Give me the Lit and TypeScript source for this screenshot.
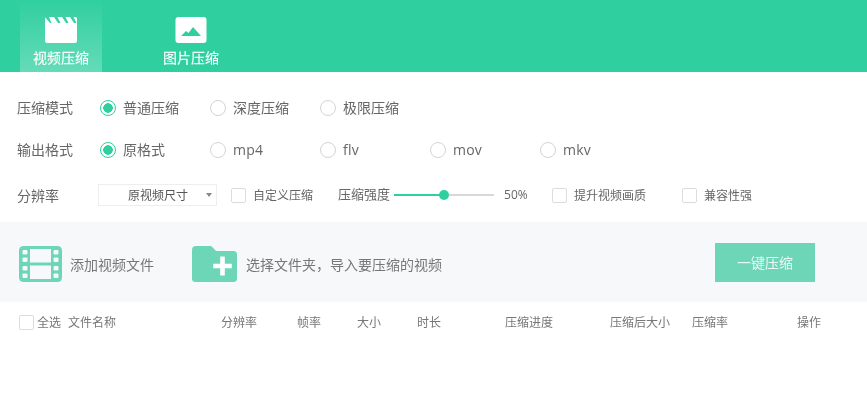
import { LitElement, html, css, svg } from "lit";
import { customElement } from "lit/decorators.js";

const clapper = svg`<svg class="tab-icon" viewBox="0 0 32 26" width="32" height="26">
  <path fill="#fff" d="M1.500 0h29a1.500 1.500 0 0 1 1.500 1.500V24a2 2 0 0 1-2 2H2a2 2 0 0 1-2-2V1.500A1.500 1.500 0 0 1 1.500 0z"/>
  <path fill="#3ad1a5" d="M0 0h4l2.500 6H5zM9 0h3.500l3 6H13zM17 0h3.500l3 6H21zM25 0h3.500l3 6H29z"/>
</svg>`;

const picture = svg`<svg class="tab-icon" viewBox="0 0 32 26" width="32" height="26">
  <rect x="0.500" y="0" width="31" height="26" rx="3" fill="#fff"/>
  <path fill="#30cfa0" d="M6 19l5-5 2.500 2 4.500-6 8 9z"/>
</svg>`;

const film = svg`<svg viewBox="0 0 43 36" width="43" height="36">
  <rect x="1.500" y="1.500" width="40" height="33" rx="3" fill="none" stroke="#6cd6b6" stroke-width="3"/>
  <path fill="#6cd6b6" d="M1 1h10v34H1zM32 1h10v34H32zM10 16.500h23v3H10z"/>
  <g fill="#f7f8fa">
    <rect x="3.500" y="4" width="5" height="4.500" rx="1"/><rect x="3.500" y="11.500" width="5" height="4.500" rx="1"/>
    <rect x="3.500" y="20" width="5" height="4.500" rx="1"/><rect x="3.500" y="27.500" width="5" height="4.500" rx="1"/>
    <rect x="34.500" y="4" width="5" height="4.500" rx="1"/><rect x="34.500" y="11.500" width="5" height="4.500" rx="1"/>
    <rect x="34.500" y="20" width="5" height="4.500" rx="1"/><rect x="34.500" y="27.500" width="5" height="4.500" rx="1"/>
  </g>
</svg>`;

const folder = svg`<svg viewBox="0 0 45 36" width="45" height="36">
  <path fill="#6cd6b6" d="M4 0h14.500a2 2 0 0 1 1.500.7L24 5h17.500A3.500 3.500 0 0 1 45 8.500V32.500a3.500 3.500 0 0 1-3.500 3.500H3.500A3.500 3.500 0 0 1 0 32.500V4A4 4 0 0 1 4 0z"/>
  <path fill="#fff" d="M28.200 10.500h4.600v7.200h7v4.600h-7v7.200h-4.600v-7.200h-7v-4.600h7z"/>
</svg>`;

const modes = ["普通压缩", "深度压缩", "极限压缩"];
const formats = ["原格式", "mp4", "flv", "mov", "mkv"];
const columns = ["分辨率", "帧率", "大小", "时长", "压缩进度", "压缩后大小", "压缩率", "操作"];

@customElement("app-root")
export class AppRoot extends LitElement {
  static styles = css`
    :host {
      display: block;
      width: 867px;
      height: 401px;
      overflow: hidden;
      background: #fff;
      color: #666;
      font-family: "Noto Sans CJK SC", "Open Sans", sans-serif;
      font-size: 14px;
      line-height: 1;
      filter: blur(0.6px);
    }
    .header {
      height: 72px;
      background: #30cfa0;
      display: flex;
      padding-left: 20px;
      gap: 48px;
      box-sizing: border-box;
    }
    .tab {
      width: 82px;
      display: flex;
      flex-direction: column;
      align-items: center;
      padding-top: 17px;
      box-sizing: border-box;
      color: rgba(255, 255, 255, 0.92);
      font-size: 14px;
      gap: 7px;
      font-weight: 500;
    }
    .tab.active {
      background: linear-gradient(180deg, rgba(255, 255, 255, 0) 0%, rgba(255, 255, 255, 0.26) 100%);
    }
    .tab-icon { display: block; }
    .options {
      height: 150px;
      box-sizing: border-box;
      padding: 25px 0 0 17px;
      display: flex;
      flex-direction: column;
      gap: 20px;
    }
    .row { display: flex; align-items: center; height: 22px; }
    .label { width: 83px; flex: none; color: #666; padding-bottom: 2px; }
    .radio-opt { width: 110px; flex: none; display: flex; align-items: center; gap: 7px; color: #666; }
    .radio-opt .text { padding-bottom: 2px; }
    .radio-opt.latin { font-family: "Open Sans", sans-serif; letter-spacing: 0.2px; }
    .radio-opt.latin .text { padding-bottom: 0; }
    .radio {
      width: 16px;
      height: 16px;
      box-sizing: border-box;
      border-radius: 50%;
      border: 1.5px solid #d4d4d4;
      background: #fff;
      flex: none;
    }
    .radio.on {
      border-color: #30cfa0;
      background: radial-gradient(circle, #30cfa0 0 4.5px, #fff 5px);
    }
    .row3 { margin-top: 3px; font-size: 12px; }
    .row3 .label { font-size: 14px; width: 81px; padding-bottom: 0; }
    .select {
      width: 119px;
      height: 22px;
      box-sizing: border-box;
      border: 1px solid #eeeeee;
      display: flex;
      align-items: center;
      flex: none;
      padding-left: 29px;
      padding-bottom: 1px;
      color: #555;
      margin-right: 14px;
    }
    .caret {
      margin-left: auto;
      margin-right: 4px;
      width: 0;
      height: 0;
      border-left: 3px solid transparent;
      border-right: 3px solid transparent;
      border-top: 4px solid #888;
    }
    .check-opt { display: flex; align-items: center; gap: 7px; flex: none; }
    .check {
      width: 15px;
      height: 15px;
      box-sizing: border-box;
      border: 1.5px solid #dcdcdc;
      border-radius: 2px;
      background: #fff;
      flex: none;
    }
    .strength { margin-left: 25px; flex: none; width: 56px; font-size: 13px; padding-bottom: 3px; }
    .slider {
      width: 100px;
      height: 2px;
      flex: none;
      background: linear-gradient(90deg, #30cfa0 50%, #d8d8d8 50%);
      position: relative;
    }
    .thumb {
      position: absolute;
      left: 45px;
      top: -4px;
      width: 10px;
      height: 10px;
      border-radius: 50%;
      background: #30cfa0;
    }
    .percent { margin-left: 10px; width: 48px; flex: none; font-family: "Open Sans", sans-serif; }
    .c1 { width: 130px; }
    .toolbar {
      height: 80px;
      background: #f7f8fa;
      display: flex;
      align-items: center;
      padding: 4px 0 0 19px;
      color: #777;
      box-sizing: border-box;
    }
    .tool { display: flex; align-items: center; flex: none; }
    .tool svg { display: block; flex: none; }
    .t1 { gap: 8px; width: 173px; }
    .t2 { gap: 9px; width: 523px; }
    .go {
      width: 100px;
      height: 39px;
      background: #6cd6b6;
      color: rgba(255, 255, 255, 0.85);
      display: flex;
      align-items: center;
      justify-content: center;
      margin-top: -4px;
    }
    .thead {
      display: grid;
      grid-template-columns: 18px 31px 153px 76px 60px 60px 88px 105px 82px 105px 30px;
      align-items: center;
      height: 40px;
      padding-left: 19px;
      font-size: 12px;
      color: #777;
      white-space: nowrap;
    }
  `;

  render() {
    return html`
      <div class="header">
        <div class="tab active">${clapper}<span>视频压缩</span></div>
        <div class="tab">${picture}<span>图片压缩</span></div>
      </div>
      <div class="options">
        <div class="row">
          <span class="label">压缩模式</span>
          ${modes.map(
            (m, i) => html`<span class="radio-opt"><span class="radio ${i === 0 ? "on" : ""}"></span><span class="text">${m}</span></span>`
          )}
        </div>
        <div class="row">
          <span class="label">输出格式</span>
          ${formats.map(
            (f, i) =>
              html`<span class="radio-opt ${i > 0 ? "latin" : ""}"><span class="radio ${i === 0 ? "on" : ""}"></span><span class="text">${f}</span></span>`
          )}
        </div>
        <div class="row row3">
          <span class="label">分辨率</span>
          <div class="select">原视频尺寸<span class="caret"></span></div>
          <span class="check-opt"><span class="check"></span>自定义压缩</span>
          <span class="strength">压缩强度</span>
          <div class="slider"><span class="thumb"></span></div>
          <span class="percent">50%</span>
          <span class="check-opt c1"><span class="check"></span>提升视频画质</span>
          <span class="check-opt"><span class="check"></span>兼容性强</span>
        </div>
      </div>
      <div class="toolbar">
        <div class="tool t1">${film}<span>添加视频文件</span></div>
        <div class="tool t2">${folder}<span>选择文件夹，导入要压缩的视频</span></div>
        <div class="go">一键压缩</div>
      </div>
      <div class="thead">
        <span class="check"></span>
        <span>全选</span>
        <span>文件名称</span>
        ${columns.map((c) => html`<span>${c}</span>`)}
      </div>
    `;
  }
}
